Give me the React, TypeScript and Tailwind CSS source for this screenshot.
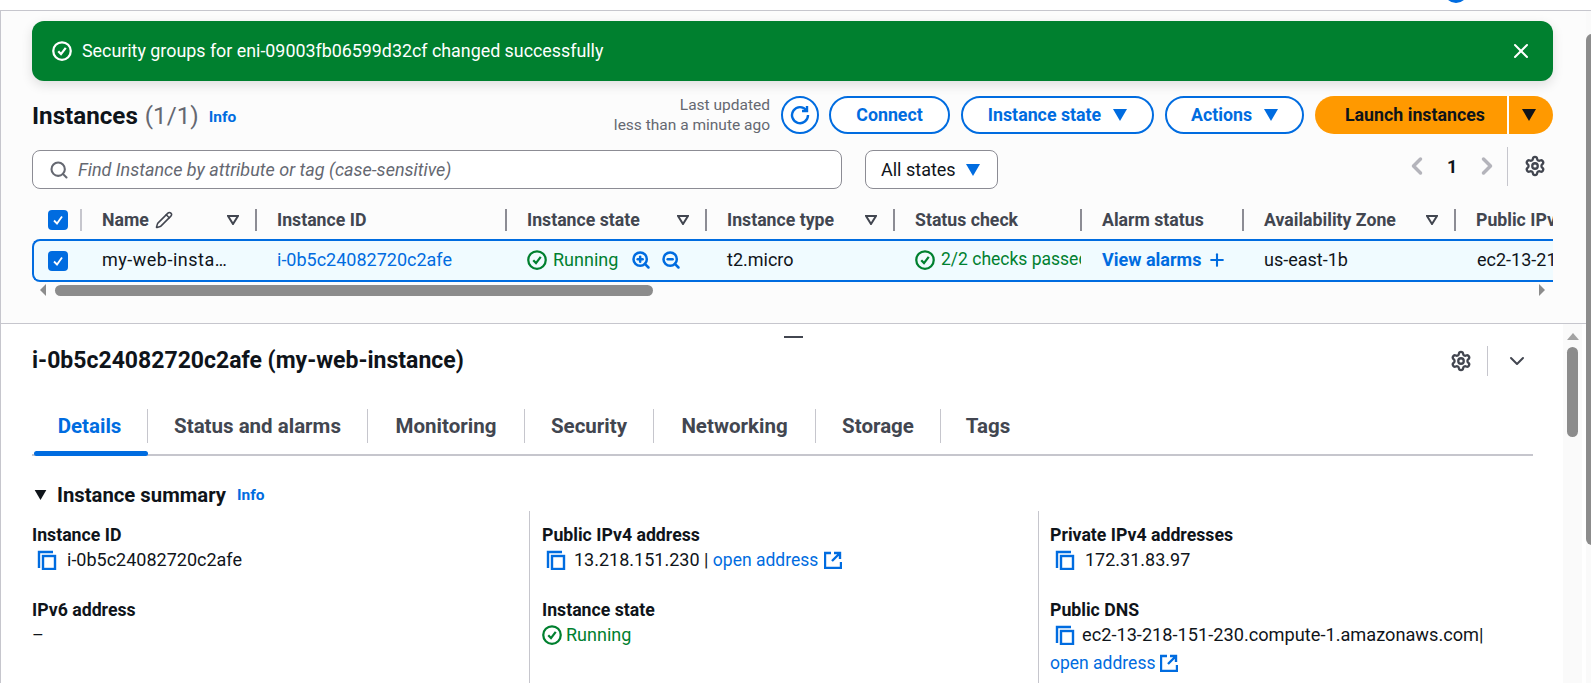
import React from 'react';
import { ChevronDown, ChevronLeft, ChevronRight, Pencil, Plus, Search, Settings, X, ZoomIn, ZoomOut } from 'lucide-react';

const columns = [
  { label: 'Name', width: 'w-[175px]', sort: false },
  { label: 'Instance ID', width: 'w-[250px]', sort: false },
  { label: 'Instance state', width: 'w-[200px]', sort: true },
  { label: 'Instance type', width: 'w-[188px]', sort: true },
  { label: 'Status check', width: 'w-[187px]', sort: false },
  { label: 'Alarm status', width: 'w-[162px]', sort: false },
  { label: 'Availability Zone', width: 'w-[212px]', sort: true },
  { label: 'Public IPv4 DNS', width: 'w-[200px]', sort: false },
];

const tabs = [
  { label: 'Details', width: 'w-[116px]' },
  { label: 'Status and alarms', width: 'w-[220px]' },
  { label: 'Monitoring', width: 'w-[157px]' },
  { label: 'Security', width: 'w-[129px]' },
  { label: 'Networking', width: 'w-[162px]' },
  { label: 'Storage', width: 'w-[125px]' },
  { label: 'Tags', width: 'w-[94px]' },
];

function CheckCircle({ className }: { className?: string }) {
  return (
    <svg viewBox="0 0 16 16" fill="none" stroke="currentColor" strokeWidth="1.8" className={className}>
      <circle cx="8" cy="8" r="7" />
      <path d="M5 8.2 7.2 10.5 11 5.5" />
    </svg>
  );
}

function CopyIcon() {
  return (
    <svg viewBox="0 0 20 20" fill="none" stroke="#006ce0" strokeWidth="2.4" className="h-5 w-5 shrink-0">
      <path d="M2 18V2h14" />
      <rect x="6" y="6" width="12" height="13" />
    </svg>
  );
}

function ExternalIcon() {
  return (
    <svg viewBox="0 0 18 18" fill="none" stroke="#006ce0" strokeWidth="2.4" className="h-[18px] w-[18px] shrink-0">
      <path d="M7 2H1v15h16v-6" />
      <path d="M10 2h6v6M16 2 8 10" />
    </svg>
  );
}

function Caret({ className }: { className: string }) {
  return (
    <svg viewBox="0 0 14 12" className={className}>
      <path d="M0 0h14L7 12z" fill="currentColor" />
    </svg>
  );
}

function SortIcon() {
  return (
    <svg viewBox="0 0 12 10" fill="none" stroke="#424650" strokeWidth="2" className="h-[10px] w-3">
      <path d="M1 1h10L6 9z" />
    </svg>
  );
}

function Check() {
  return (
    <span className="flex h-5 w-5 items-center justify-center rounded-[4px] bg-[#006ce0]">
      <svg viewBox="0 0 12 12" fill="none" stroke="white" strokeWidth="1.8" className="h-3 w-3">
        <path d="M2 6.5 5 9.5 10 2.5" />
      </svg>
    </span>
  );
}

function OutlineButton({ label, caret, width }: { label: string; caret?: boolean; width: string }) {
  return (
    <button className={`flex h-[38px] items-center justify-center gap-3 rounded-[19px] border-2 border-[#006ce0] bg-white text-[17.8px] font-bold text-[#006ce0] ${width}`}>
      {label}
      {caret && <Caret className="h-3 w-[14px]" />}
    </button>
  );
}

function Field({ label, children }: { label: string; children: React.ReactNode }) {
  return (
    <div className="h-[77px]">
      <div className="mt-[-2px] text-[17.7px] leading-6 font-bold text-[#0f141a]">{label}</div>
      <div className="text-[18px] leading-[26px] text-[#0f141a]">{children}</div>
    </div>
  );
}

export default function App() {
  return (
    <div className="relative h-[683px] w-[1591px] overflow-hidden bg-white font-['Roboto',sans-serif]">
      <div className="absolute top-[-21px] left-[1444px] h-6 w-6 rounded-full bg-[#006ce0]" />

      <div className="h-[11px] border-b border-[#c6c6cd]" />

      {/* Top pane */}
      <div className="h-[313px] border-b border-l border-[#c6c6cd] bg-[#fcfcfc] pt-[10px] pr-[38px] pl-[31px]">
        <div className="flex h-[60px] items-center rounded-xl bg-[#00802f] pr-[20px] pl-5 text-[17.85px] text-white shadow-[0_4px_12px_rgba(0,0,0,0.12)]">
          <CheckCircle className="h-5 w-5" />
          <span className="ml-[10px] flex-1">Security groups for eni-09003fb06599d32cf changed successfully</span>
          <X className="h-6 w-6" strokeWidth={2} />
        </div>

        <div className="mt-[15px] flex h-[38px] items-center">
          <h1 className="mt-[3px] text-[24.2px] font-bold text-[#0f141a]">Instances</h1>
          <span className="mt-[3px] ml-[7px] text-[24.2px] text-[#656871]">(1/1)</span>
          <span className="mt-[6px] ml-[10px] text-[15.5px] font-bold text-[#006ce0]">Info</span>
          <div className="ml-auto mr-[11px] text-right text-[15.5px] leading-5 text-[#656871]">
            <div>Last updated</div>
            <div>less than a minute ago</div>
          </div>
          <div className="mr-[10px] flex h-[38px] w-[38px] items-center justify-center rounded-full border-2 border-[#006ce0] bg-white">
            <svg viewBox="0 0 20 20" fill="none" stroke="#006ce0" strokeWidth="2.4" className="h-5 w-5">
              <path d="M16.5 5.5A8 8 0 1 0 18 10" />
              <path d="M17 1v5h-5" />
            </svg>
          </div>
          <div className="flex gap-[11px]">
            <OutlineButton label="Connect" width="w-[121px]" />
            <OutlineButton label="Instance state" caret width="w-[193px]" />
            <OutlineButton label="Actions" caret width="w-[139px]" />
            <div className="flex h-[38px] w-[238px] overflow-hidden rounded-[19px] bg-[#ff9900] text-[#0f141a]">
              <div className="flex w-[194px] items-center justify-center border-r-2 border-white pl-2 text-[17.8px] font-bold">Launch instances</div>
              <div className="flex flex-1 items-center justify-center pr-1">
                <Caret className="h-3 w-[14px]" />
              </div>
            </div>
          </div>
        </div>

        <div className="mt-[16px] flex h-[39px] items-center">
          <div className="flex h-[39px] w-[810px] items-center gap-[9px] rounded-lg border border-[#8c8c94] bg-white pl-[16px]">
            <Search className="h-5 w-5 text-[#656871]" strokeWidth={2.5} />
            <span className="text-[18px] text-[#656871] italic">Find Instance by attribute or tag (case-sensitive)</span>
          </div>
          <div className="ml-[23px] flex h-[39px] w-[133px] items-center gap-[10px] rounded-lg border border-[#8c8c94] bg-white pl-[15px] text-[18px] text-[#0f141a]">
            All states
            <Caret className="h-3 w-[14px] text-[#006ce0]" />
          </div>
          <div className="mt-[-7px] ml-auto flex h-[39px] items-center">
            <ChevronLeft className="h-7 w-7 text-[#b4b4bb]" strokeWidth={3} />
            <span className="mx-[16px] w-[10px] text-[18px] font-bold text-[#0f141a]">1</span>
            <ChevronRight className="h-7 w-7 text-[#b4b4bb]" strokeWidth={3} />
            <div className="mr-[16px] ml-[6px] h-[39px] w-px bg-[#c6c6cd]" />
            <Settings className="h-[22px] w-[22px] text-[#424650]" strokeWidth={2.5} />
            <div className="w-[7px]" />
          </div>
        </div>

        {/* Table */}
        <div className="mt-[20px] overflow-hidden">
          <div className="flex h-[30px] items-start">
            <div className="flex h-[22px] w-[50px] shrink-0 items-center border-r-2 border-[#c6c6cd] pl-4">
              <Check />
            </div>
            {columns.map((c) => (
              <div key={c.label} className={`flex h-[22px] shrink-0 items-center border-r-2 border-[#8c8c94] pr-[16px] pl-[20px] text-[17.7px] font-bold whitespace-nowrap text-[#424650] ${c.width}`}>
                {c.label}
                {c.label === 'Name' && <Pencil className="ml-[6px] h-[18px] w-[18px]" strokeWidth={2} />}
                {(c.sort || c.label === 'Name') && (
                  <span className="ml-auto">
                    <SortIcon />
                  </span>
                )}
              </div>
            ))}
          </div>
          <div className="flex h-[43px] items-center rounded-l-lg border-y-2 border-l-2 border-[#006ce0] bg-[#f0fbff] pb-[2px] text-[18px] whitespace-nowrap text-[#0f141a]">
            <div className="w-[47px] shrink-0 pt-[2px] pl-[14px]">
              <Check />
            </div>
            <div className="w-[175px] shrink-0 pl-[21px] tracking-[0.5px]">my-web-insta…</div>
            <div className="w-[250px] shrink-0 pl-[21px] text-[#006ce0]">i-0b5c24082720c2afe</div>
            <div className="flex w-[200px] shrink-0 items-center pl-[21px] text-[#00802f]">
              <CheckCircle className="mr-[6px] h-5 w-5" />
              Running
              <ZoomIn className="ml-[13px] h-5 w-5 text-[#006ce0]" strokeWidth={3} />
              <ZoomOut className="ml-[10px] h-5 w-5 text-[#006ce0]" strokeWidth={3} />
            </div>
            <div className="w-[188px] shrink-0 pl-[21px]">t2.micro</div>
            <div className="flex w-[187px] shrink-0 items-center overflow-hidden pl-[21px] text-[17.5px] text-[#00802f]">
              <CheckCircle className="mr-[6px] h-5 w-5 shrink-0" />
              2/2 checks passed
            </div>
            <div className="flex w-[162px] shrink-0 items-center pl-[21px] font-bold text-[#006ce0]">
              View alarms
              <Plus className="ml-[6px] h-5 w-5" strokeWidth={2.5} />
            </div>
            <div className="w-[213px] shrink-0 pl-[21px]">us-east-1b</div>
            <div className="w-[200px] shrink-0 pl-[21px]">ec2-13-218-151-230</div>
          </div>
          <div className="mt-[2px] flex h-[12px] items-center">
            <svg viewBox="0 0 6 12" className="ml-[8px] h-3 w-[6px] text-[#8c8c8c]">
              <path d="M6 0v12L0 6z" fill="currentColor" />
            </svg>
            <div className="ml-[9px] h-[11px] w-[598px] rounded-full bg-[#8c8c8c]" />
            <svg viewBox="0 0 6 12" className="ml-auto mr-[8px] h-3 w-[6px] text-[#8c8c8c]">
              <path d="M0 0v12l6-6z" fill="currentColor" />
            </svg>
          </div>
        </div>
      </div>

      {/* Details pane */}
      <div className="relative h-[359px] border-l border-[#c6c6cd] pr-[58px] pl-[31px]">
        <div className="absolute top-[12px] left-[783px] h-[2px] w-[19px] bg-[#424650]" />

        <div className="flex h-[74px] items-center">
          <h2 className="text-[23px] font-bold text-[#0f141a]">i-0b5c24082720c2afe (my-web-instance)</h2>
          <div className="ml-auto mr-[4px] flex items-center">
            <Settings className="mr-[-2px] h-[22px] w-[22px] text-[#424650]" strokeWidth={2.5} />
            <div className="mx-[17px] h-[30px] w-px bg-[#c6c6cd]" />
            <ChevronDown className="h-6 w-6 text-[#424650]" strokeWidth={2} />
          </div>
        </div>

        <div className="relative mt-[11px] flex h-[47px] items-start border-b-2 border-[#c6c6cd]">
          {tabs.map((t, i) => (
            <div
              key={t.label}
              className={`flex h-[34px] items-center justify-center text-[20.5px] font-bold ${t.width} ${i === tabs.length - 1 ? '' : 'border-r border-[#c6c6cd]'} ${i === 0 ? 'text-[#006ce0]' : 'text-[#424650]'}`}
            >
              {t.label}
            </div>
          ))}
          <div className="absolute bottom-[-2px] left-[2px] h-[5px] w-[114px] rounded-full bg-[#006ce0]" />
        </div>

        <div className="mt-[25px] flex items-center">
          <Caret className="ml-[2px] h-[10px] w-[13px] text-[#0f141a]" />
          <h3 className="ml-[10px] text-[20.3px] leading-7 font-bold text-[#0f141a]">Instance summary</h3>
          <span className="mt-[2px] ml-[11px] text-[15.5px] font-bold text-[#006ce0]">Info</span>
        </div>

        <div className="mt-[2px] grid h-[200px] grid-cols-[497px_509px_1fr]">
          <div className="pt-[14px]">
            <Field label="Instance ID">
              <div className="flex items-center gap-[10px] pl-[5px]">
                <CopyIcon />
                i-0b5c24082720c2afe
              </div>
            </Field>
            <Field label="IPv6 address">–</Field>
          </div>
          <div className="border-l border-[#c6c6cd] pt-[14px] pl-[12px]">
            <Field label="Public IPv4 address">
              <div className="flex items-center gap-[8px] pl-[4px]">
                <CopyIcon />
                <span>
                  13.218.151.230 | <span className="text-[17.5px] text-[#006ce0]">open address</span>
                </span>
                <span className="ml-[-2px]">
                  <ExternalIcon />
                </span>
              </div>
            </Field>
            <Field label="Instance state">
              <div className="flex items-center gap-[4px] text-[#00802f]">
                <CheckCircle className="h-5 w-5" />
                Running
              </div>
            </Field>
          </div>
          <div className="border-l border-[#c6c6cd] pt-[14px] pl-[11px]">
            <Field label="Private IPv4 addresses">
              <div className="flex items-center gap-[10px] pl-[5px]">
                <CopyIcon />
                172.31.83.97
              </div>
            </Field>
            <div className="mt-[-2px] text-[17.7px] leading-6 font-bold text-[#0f141a]">Public DNS</div>
            <div className="flex items-center gap-[7px] pl-[5px] text-[18.2px] leading-[26px] text-[#0f141a]">
              <CopyIcon />
              ec2-13-218-151-230.compute-1.amazonaws.com|
            </div>
            <div className="mt-[3px] flex items-center gap-[5px] text-[17.5px] leading-6 text-[#006ce0]">
              open address
              <ExternalIcon />
            </div>
          </div>
        </div>

        {/* Inner scrollbar */}
        <div className="absolute top-0 right-[9px] bottom-0 flex w-[19px] flex-col items-center bg-[#fafafa]">
          <svg viewBox="0 0 12 7" className="mt-[9px] h-[7px] w-3 text-[#a3a3a3]">
            <path d="M0 7h12L6 0z" fill="currentColor" />
          </svg>
          <div className="mt-[7px] h-[90px] w-[11px] rounded-full bg-[#8c8c8c]" />
        </div>
      </div>

      {/* Page scrollbar */}
      <div className="absolute top-[11px] right-0 bottom-0 w-[5px] bg-[#fafafa]">
        <div className="mt-[23px] h-[511px] w-[6px] rounded-l-full bg-[#8c8c8c]" />
      </div>
    </div>
  );
}
